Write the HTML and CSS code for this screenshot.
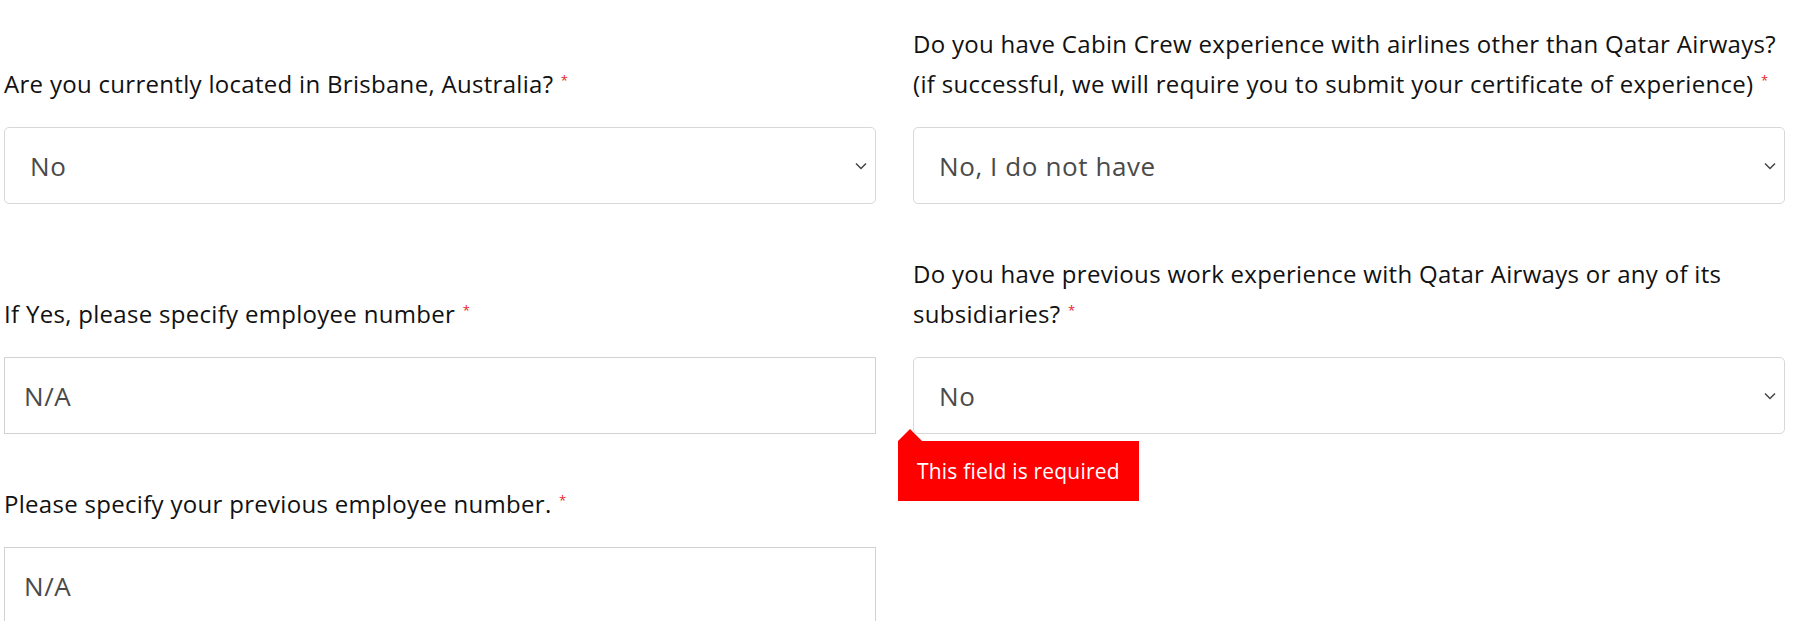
FILE: index.html
```html
<!DOCTYPE html>
<html lang="en">
<head>
<meta charset="utf-8">
<title>Application form</title>
<link rel="stylesheet" href="styles.css">
</head>
<body>
<form class="form-grid">
  <div class="field">
    <label class="label">Are you currently located in Brisbane, Australia? <span class="req">*</span></label>
    <div class="select">
      <span class="value">No</span>
      <svg class="chev" width="12" height="8" viewBox="0 0 12 8"><path d="M1 1.5 L6 6.5 L11 1.5" fill="none" stroke="#444" stroke-width="1.5"/></svg>
    </div>
  </div>
  <div class="field">
    <label class="label">Do you have Cabin Crew experience with airlines other than Qatar Airways?<br>(if successful, we will require you to submit your certificate of experience) <span class="req">*</span></label>
    <div class="select">
      <span class="value">No, I do not have</span>
      <svg class="chev" width="12" height="8" viewBox="0 0 12 8"><path d="M1 1.5 L6 6.5 L11 1.5" fill="none" stroke="#444" stroke-width="1.5"/></svg>
    </div>
  </div>
  <div class="field">
    <label class="label">If Yes, please specify employee number <span class="req">*</span></label>
    <div class="input"><span class="value">N/A</span></div>
  </div>
  <div class="field">
    <label class="label">Do you have previous work experience with Qatar Airways or any of its<br>subsidiaries? <span class="req">*</span></label>
    <div class="select-wrap">
      <div class="select">
        <span class="value">No</span>
        <svg class="chev" width="12" height="8" viewBox="0 0 12 8"><path d="M1 1.5 L6 6.5 L11 1.5" fill="none" stroke="#444" stroke-width="1.5"/></svg>
      </div>
      <div class="tooltip">This field is required</div>
    </div>
  </div>
  <div class="field">
    <label class="label">Please specify your previous employee number. <span class="req">*</span></label>
    <div class="input"><span class="value">N/A</span></div>
  </div>
</form>
</body>
</html>
```

FILE: styles.css
```css
html, body {
  margin: 0;
  padding: 0;
  background: #ffffff;
  overflow: hidden;
}
body {
  font-family: "Open Sans", "Lato", sans-serif;
  color: #111111;
}
.form-grid {
  display: grid;
  grid-template-columns: 872px 872px;
  column-gap: 37px;
  row-gap: 50px;
  align-items: end;
  padding: 24px 0 0 4px;
}
.field {
  display: flex;
  flex-direction: column;
}
.label {
  display: block;
  font-size: 24px;
  letter-spacing: 0.3px;
  line-height: 40px;
  margin-bottom: 23px;
  color: #111111;
  white-space: nowrap;
}
.req {
  color: #e8202a;
  font-size: 13px;
  line-height: 1;
  vertical-align: 8px;
  margin-left: 1px;
}
.select, .input {
  box-sizing: border-box;
  height: 77px;
  display: flex;
  align-items: center;
  justify-content: space-between;
  padding: 0 8px 0 25px;
  font-size: 26px;
  letter-spacing: 0.6px;
  color: #4a4a4a;
  background: #fff;
}
.select {
  border: 1px solid #d8d8d8;
  border-radius: 5px;
}
.input {
  border: 1px solid #d2d2d2;
  border-radius: 0;
  padding-left: 19px;
}
.chev {
  display: block;
}
.select-wrap {
  position: relative;
}
.tooltip {
  position: absolute;
  left: -15px;
  top: 84px;
  background: #ff0000;
  color: #ffffff;
  font-size: 21px;
  letter-spacing: 0.2px;
  line-height: 60px;
  height: 60px;
  padding: 0 19px;
  white-space: nowrap;
}
.tooltip::before {
  content: "";
  position: absolute;
  left: 0;
  top: -12px;
  border-left: 12px solid transparent;
  border-right: 12px solid transparent;
  border-bottom: 12px solid #ff0000;
}
```
